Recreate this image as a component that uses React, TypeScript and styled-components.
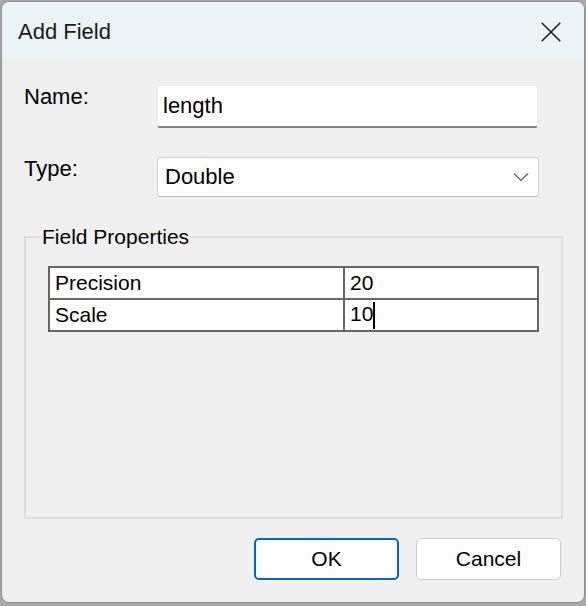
import React from "react";
import styled, { createGlobalStyle } from "styled-components";

const GlobalStyle = createGlobalStyle`
  html, body {
    margin: 0;
    padding: 0;
    background: #a9a9a9;
  }
  body {
    font-family: "Liberation Sans", Arial, sans-serif;
    color: #000;
  }
  * { box-sizing: border-box; }
`;

const Window = styled.div`
  width: 584px;
  height: 602px;
  margin: 1px 0 0 1px;
  border: 1px solid #8e8e8e;
  border-radius: 8px;
  overflow: hidden;
  background: #f0f0f0;
  display: flex;
  flex-direction: column;
`;

const TitleBar = styled.div`
  height: 59px;
  flex: none;
  display: flex;
  align-items: center;
  justify-content: space-between;
  padding: 0 23px 0 16px;
  background: #eaf4f6;
`;

const Title = styled.div`
  font-size: 22px;
  color: #1b1b1b;
  line-height: 24px;
`;

const CloseIcon = styled.svg`
  display: block;
  width: 20px;
  height: 20px;
`;

const Body = styled.div`
  flex: 1;
  min-height: 0;
  display: flex;
  flex-direction: column;
  padding: 24px 21px 22px 22px;
`;

const Form = styled.div`
  display: grid;
  grid-template-columns: 133px 382px;
  row-gap: 29px;
`;

const Label = styled.div`
  font-size: 22px;
  line-height: 24px;
`;

const TextBox = styled.div<{ $h: number }>`
  height: ${(p) => p.$h}px;
  width: 381px;
  background: #ffffff;
  border: 1px solid #ececec;
  border-bottom: 2px solid #848484;
  border-radius: 3px;
  display: flex;
  align-items: center;
  padding: 0 0 0 5px;
  font-size: 22px;
  line-height: 24px;
`;

const Combo = styled.div`
  height: 40px;
  width: 382px;
  background: #fdfdfd;
  border: 1px solid #d2d2d2;
  border-bottom-color: #c4c4c4;
  border-radius: 3px;
  display: flex;
  align-items: center;
  justify-content: space-between;
  padding: 0 9px 0 7px;
  font-size: 22px;
  line-height: 24px;
`;

const Chevron = styled.svg`
  display: block;
  width: 16px;
  height: 10px;
`;

const Group = styled.fieldset`
  flex: 1;
  min-height: 0;
  margin: 28px 0 0 0;
  padding: 0;
  border: 2px solid #dcdcdc;
  min-width: 0;
`;

const Legend = styled.legend`
  margin-left: 14px;
  padding: 0 2px;
  font-size: 21px;
  line-height: 24px;
`;

const GroupInner = styled.div`
  padding: 17px 22px 0 22px;
`;

const Grid = styled.table`
  width: 491px;
  border-collapse: collapse;
  border: 2px solid #666666;
  background: #ffffff;
  font-size: 21px;
`;

const Cell = styled.td<{ $w?: number }>`
  height: 32px;
  padding: 0 5px;
  border: 2px solid #666666;
  line-height: 24px;
  width: ${(p) => (p.$w ? `${p.$w}px` : "auto")};
  white-space: nowrap;
`;

const Caret = styled.span`
  display: inline-block;
  width: 2px;
  height: 27px;
  background: #000;
  vertical-align: middle;
`;

const Buttons = styled.div`
  display: flex;
  justify-content: flex-end;
  gap: 17px;
  margin-top: 19px;
  padding-right: 2px;
`;

const Button = styled.button<{ $primary?: boolean }>`
  width: 145px;
  height: 42px;
  border-radius: 5px;
  background: #fdfdfd;
  border: ${(p) => (p.$primary ? "2px solid #0067c0" : "1px solid #cfcfcf")};
  font-family: "Liberation Sans", Arial, sans-serif;
  font-size: 21px;
  color: #000;
  padding: 0;
`;

export default function App() {
  return (
    <>
      <GlobalStyle />
      <Window>
        <TitleBar>
          <Title>Add Field</Title>
          <CloseIcon viewBox="0 0 20 20">
            <path d="M0.7 0.7 L19.3 19.3 M19.3 0.7 L0.7 19.3" stroke="#1b1b1b" strokeWidth="1.5" fill="none" />
          </CloseIcon>
        </TitleBar>
        <Body>
          <Form>
            <Label>Name:</Label>
            <TextBox $h={43}>length</TextBox>
            <Label>Type:</Label>
            <Combo>
              <span>Double</span>
              <Chevron viewBox="0 0 16 10">
                <polyline points="1,1.5 8,8.5 15,1.5" stroke="#5a5a5a" strokeWidth="1.2" fill="none" />
              </Chevron>
            </Combo>
          </Form>
          <Group>
            <Legend>Field Properties</Legend>
            <GroupInner>
              <Grid>
                <tbody>
                  <tr>
                    <Cell $w={295}>Precision</Cell>
                    <Cell>20</Cell>
                  </tr>
                  <tr>
                    <Cell $w={295}>Scale</Cell>
                    <Cell>
                      10
                      <Caret />
                    </Cell>
                  </tr>
                </tbody>
              </Grid>
            </GroupInner>
          </Group>
          <Buttons>
            <Button $primary>OK</Button>
            <Button>Cancel</Button>
          </Buttons>
        </Body>
      </Window>
    </>
  );
}
